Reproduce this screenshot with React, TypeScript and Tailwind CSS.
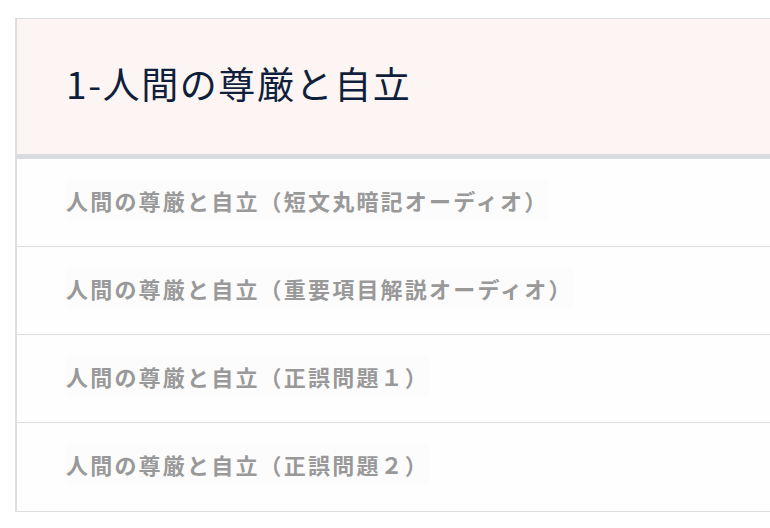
import React from "react";

const items = [
  "人間の尊厳と自立（短文丸暗記オーディオ）",
  "人間の尊厳と自立（重要項目解説オーディオ）",
  "人間の尊厳と自立（正誤問題１）",
  "人間の尊厳と自立（正誤問題２）",
];

export default function App() {
  return (
    <div
      className="w-[770px] h-[528px] overflow-hidden bg-white pt-[18px] pl-[15px]"
      style={{ fontFamily: '"Noto Sans CJK JP", "Noto Sans", sans-serif' }}
    >
      <div className="w-[790px] border-t border-l-2 border-b border-[#dddddd]">
        <div className="h-[140px] bg-[#fdf5f4] flex items-center pl-[49px] pb-[6px] border-b-[5px] border-[#d9dde2]">
          <h1 className="text-[37px] leading-none text-[#0f1f3b] font-normal tracking-[1.6px]">
            1-人間の尊厳と自立
          </h1>
        </div>
        {items.map((t, i) => (
          <div
            key={i}
            className={`h-[88px] flex items-center pl-[49px] pb-[6px] bg-[#fefefe] ${
              i < items.length - 1 ? "border-b border-[#dedede]" : ""
            }`}
          >
            <span className="text-[22px] leading-[40px] font-bold text-[#999999] tracking-[2.2px] bg-[#fcfcfc]">
              {t}
            </span>
          </div>
        ))}
      </div>
    </div>
  );
}
